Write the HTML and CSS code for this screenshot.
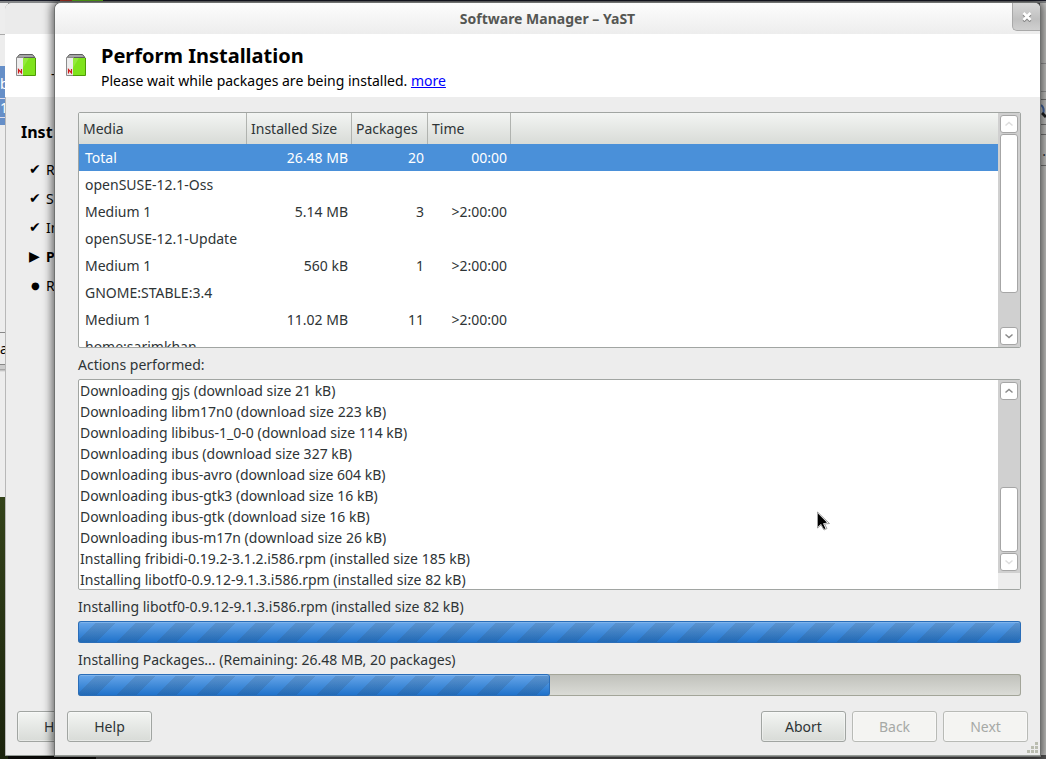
FILE: index.html
```html
<!DOCTYPE html>
<html lang="en">
<head>
<meta charset="utf-8">
<title>Software Manager – YaST</title>
<link rel="stylesheet" href="styles.css">
</head>
<body>
<div class="desktop">
  <div class="back-left" aria-hidden="true">
    <div class="back-toolbar"></div>
    <div class="back-selection"><span>b</span><span>1</span></div>
    <div class="back-button">a</div>
  </div>
  <div class="back-right" aria-hidden="true">
    <div class="back-right-bar"></div>
    <div class="back-right-line"></div>
    <div class="back-right-search"><svg viewBox="0 0 5 24" width="5" height="24"><path d="M0 5q4 3 2 9" stroke="#4569a8" stroke-width="2" fill="none"/><path d="M1 13l4 4" stroke="#222" stroke-width="3"/></svg></div>
    <div class="back-right-field">.</div>
  </div>
  <div class="top-icon" aria-hidden="true"></div>

  <section class="window parent" aria-label="Software installation steps">
    <div class="titlebar"></div>
    <header class="banner">
      <svg class="app-icon" viewBox="0 0 20 22" width="20" height="22"><path d="M3.500 .5h13l2.500 3H1z" fill="#a6a6a6" stroke="#5c5c5c"/><path d="M.5 3.500h7v18h-7z" fill="#ededed" stroke="#8c8c8c"/><path d="M7 4h12.500v17.500H7z" fill="#7fe31c"/><path d="M7 4h6L7 14z" fill="#93ea3c"/><path d="M19.500 4v17.500H7" fill="none" stroke="#4e9a06"/><path d="M2.500 19.500v-4l3 3.500v-4" fill="none" stroke="#d01c1c" stroke-width="1.200"/></svg>
      <span class="dash">-</span>
    </header>
    <div class="steps">
      <h2>Inst</h2>
      <ul>
        <li><span class="mark">✔</span>R</li>
        <li><span class="mark">✔</span>S</li>
        <li><span class="mark">✔</span>In</li>
        <li class="current"><span class="mark">▶</span>P</li>
        <li><span class="mark dot">●</span>R</li>
      </ul>
    </div>
    <footer class="parent-actions"><button class="button" type="button">H</button></footer>
  </section>

  <main class="window dialog">
    <div class="titlebar"><span>Software Manager – YaST</span>
      <button class="close" type="button" aria-label="Close"><svg viewBox="0 0 10 10" width="10" height="10"><path d="M1.500 2.500l7 7M8.500 2.500l-7 7" stroke="#888" stroke-width="2.500"/><path d="M1.500 1l7 7M8.500 1l-7 7" stroke="#fff" stroke-width="2.500"/></svg></button>
    </div>
    <header class="banner">
      <svg class="app-icon" viewBox="0 0 20 22" width="20" height="22"><path d="M3.500 .5h13l2.500 3H1z" fill="#a6a6a6" stroke="#5c5c5c"/><path d="M.5 3.500h7v18h-7z" fill="#ededed" stroke="#8c8c8c"/><path d="M7 4h12.500v17.500H7z" fill="#7fe31c"/><path d="M7 4h6L7 14z" fill="#93ea3c"/><path d="M19.500 4v17.500H7" fill="none" stroke="#4e9a06"/><path d="M2.500 19.500v-4l3 3.500v-4" fill="none" stroke="#d01c1c" stroke-width="1.200"/></svg>
      <div>
        <h1>Perform Installation</h1>
        <p>Please wait while packages are being installed. <a href="#more">more</a></p>
      </div>
    </header>

    <div class="content">
      <div class="frame media">
        <div class="viewport">
          <table>
            <colgroup><col class="c-media"><col class="c-size"><col class="c-packages"><col class="c-time"><col></colgroup>
            <thead><tr><th>Media</th><th>Installed Size</th><th>Packages</th><th>Time</th><th></th></tr></thead>
            <tbody>
              <tr class="selected"><td>Total</td><td>26.48 MB</td><td>20</td><td>00:00</td><td></td></tr>
              <tr><td>openSUSE-12.1-Oss</td><td></td><td></td><td></td><td></td></tr>
              <tr><td>Medium 1</td><td>5.14 MB</td><td>3</td><td>&gt;2:00:00</td><td></td></tr>
              <tr><td>openSUSE-12.1-Update</td><td></td><td></td><td></td><td></td></tr>
              <tr><td>Medium 1</td><td>560 kB</td><td>1</td><td>&gt;2:00:00</td><td></td></tr>
              <tr><td>GNOME:STABLE:3.4</td><td></td><td></td><td></td><td></td></tr>
              <tr><td>Medium 1</td><td>11.02 MB</td><td>11</td><td>&gt;2:00:00</td><td></td></tr>
              <tr><td>home:sarimkhan</td><td></td><td></td><td></td><td></td></tr>
            </tbody>
          </table>
        </div>
        <div class="scrollbar">
          <button type="button" class="off" aria-label="Scroll up"><svg viewBox="0 0 8 8" width="8" height="8"><path d="M.5 5.500L4 2.500l3.500 3"/></svg></button>
          <div class="track"><div class="thumb thumb-media"></div></div>
          <button type="button" aria-label="Scroll down"><svg viewBox="0 0 8 8" width="8" height="8"><path d="M.5 2.500L4 5.500l3.500-3"/></svg></button>
        </div>
      </div>

      <h2 class="label">Actions performed:</h2>
      <div class="frame actions">
        <ul class="viewport log">
          <li>Downloading gjs (download size 21 kB)</li>
          <li>Downloading libm17n0 (download size 223 kB)</li>
          <li>Downloading libibus-1_0-0 (download size 114 kB)</li>
          <li>Downloading ibus (download size 327 kB)</li>
          <li>Downloading ibus-avro (download size 604 kB)</li>
          <li>Downloading ibus-gtk3 (download size 16 kB)</li>
          <li>Downloading ibus-gtk (download size 16 kB)</li>
          <li>Downloading ibus-m17n (download size 26 kB)</li>
          <li>Installing fribidi-0.19.2-3.1.2.i586.rpm (installed size 185 kB)</li>
          <li>Installing libotf0-0.9.12-9.1.3.i586.rpm (installed size 82 kB)</li>
        </ul>
        <div class="scroll-column">
          <div class="scrollbar">
            <button type="button" aria-label="Scroll up"><svg viewBox="0 0 8 8" width="8" height="8"><path d="M.5 5.500L4 2.500l3.500 3"/></svg></button>
            <div class="track end"><div class="thumb thumb-actions"></div></div>
            <button type="button" class="off" aria-label="Scroll down"><svg viewBox="0 0 8 8" width="8" height="8"><path d="M.5 2.500L4 5.500l3.500-3"/></svg></button>
          </div>
          <div class="corner"></div>
        </div>
      </div>

      <p class="label" id="p1">Installing libotf0-0.9.12-9.1.3.i586.rpm (installed size 82 kB)</p>
      <div class="progress" role="progressbar" aria-labelledby="p1" aria-valuenow="100"><div class="fill" style="width:100%"></div></div>
      <p class="label" id="p2">Installing Packages... (Remaining: 26.48 MB, 20 packages)</p>
      <div class="progress" role="progressbar" aria-labelledby="p2" aria-valuenow="50"><div class="fill" style="width:50%"></div></div>
    </div>

    <footer class="buttons">
      <button class="button" type="button">Help</button>
      <span class="spacer"></span>
      <button class="button" type="button">Abort</button>
      <button class="button" type="button" disabled>Back</button>
      <button class="button" type="button" disabled>Next</button>
    </footer>
    <svg class="grip" viewBox="0 0 11 11" width="11" height="11" aria-hidden="true"><path d="M8 0h3v3H8zM4 4h3v3H4zM8 4h3v3H8zM0 8h3v3H0zM4 8h3v3H4zM8 8h3v3H8z" fill="#babdb0"/></svg>
  </main>
  <svg class="pointer" viewBox="0 0 13 20" width="13" height="20" aria-hidden="true"><path d="M.5 1v16l3.500-3 3 5 3-1.500-2.500-4.500 5-.5z" fill="#fff" stroke="#888" stroke-width=".8"/><path d="M1 2.500v13l3-2.500 3 5 1.500-.5-2.500-5 4-1z" fill="#000"/></svg>
</div>
</body>
</html>
```
FILE: styles.css
```css
* { box-sizing: border-box; }
body {
  margin: 0;
  font: 14px/20px "Noto Sans", "Open Sans", sans-serif;
  color: #2e3436;
}
h1, h2, p, ul { margin: 0; padding: 0; font-weight: normal; font-size: inherit; }
ul { list-style: none; }
.desktop {
  position: relative;
  height: 100vh;
  overflow: hidden;
  background: linear-gradient(90deg, #0a0a08 96px, #555 96px);
}
.desktop::before {
  content: "";
  position: absolute;
  inset: 0 0 auto 0;
  height: 3px;
  background: linear-gradient(#1b1d2a 1px, #858789 1px);
}
.top-icon {
  position: absolute;
  left: 60px;
  top: 0;
  width: 43px;
  height: 1px;
  background: linear-gradient(90deg, #c43a28 12px, #6ad01a 12px);
}

/* Slivers of the windows behind */
.back-left {
  position: absolute;
  left: 0;
  top: 3px;
  bottom: 0;
  width: 8px;
  display: flex;
  flex-direction: column;
  background: linear-gradient(#ededed 494px, #34431a 494px, #1b230d);
}
.back-toolbar { height: 32px; border-bottom: 1px solid #aaa; }
.back-selection {
  display: flex;
  flex-direction: column;
  gap: 4px;
  height: 59px;
  margin-top: 31px;
  padding-top: 8px;
  background: #668fc8;
  color: #fff;
}
.back-selection span { height: 20px; }
.back-selection span + span { border: 1px solid #dde; border-left: 0; line-height: 18px; }
.back-button {
  height: 40px;
  margin-top: 207px;
  line-height: 32px;
  color: #000;
  border-top: 1px solid #888;
  background: linear-gradient(#ededed 31px, #888 31px 32px, #ccc 32px 36px, #999 36px, #ededed);
}
.back-right {
  position: absolute;
  right: 0;
  top: 3px;
  bottom: 4px;
  width: 6px;
  background: #c8c8c6;
}
.back-right-bar { height: 61px; border-bottom: 1px solid #999; }
.back-right-line { height: 28px; border-bottom: 1px solid #999; }
.back-right-search { height: 26px; margin-top: 7px; padding-left: 1px; border: solid #777; border-width: 1px 0; }
.back-right-field { height: 32px; margin-top: 9px; border: solid #777; border-width: 1px 0; line-height: 32px; text-align: right; }

/* Windows */
.window {
  position: absolute;
  top: 3px;
  bottom: 3px;
  display: flex;
  flex-direction: column;
  background: #ededed;
  border-radius: 6px 6px 0 0;
  border-bottom: 1px solid #969c97;
}
.parent { left: 5px; width: 60px; overflow: hidden; box-shadow: inset 1px 0 #b8b8b8; }
.dialog {
  left: 55px;
  right: 6px;
  box-shadow: 0 0 0 1px #6f7170, 0 0 10px 3px rgba(0, 0, 0, .6);
}
.titlebar {
  position: relative;
  flex: 0 0 31px;
  display: flex;
  justify-content: center;
  align-items: center;
  border-radius: 6px 6px 0 0;
  background: linear-gradient(#fdfdfd, #ededed);
  font-weight: bold;
  color: #555753;
}
.parent .titlebar { background: #ebebeb; }
.close {
  position: absolute;
  right: 0;
  top: 0;
  width: 28px;
  height: 28px;
  padding: 0;
  border: 1px solid #a9a9a9;
  border-width: 0 0 1px 1px;
  border-radius: 0 5px 0 5px;
  background: linear-gradient(#d8d8d8, #c0c0c0 60%, #cfcfcf);
  display: grid;
  place-items: center;
}
.banner {
  flex: 0 0 63px;
  display: flex;
  align-items: flex-start;
  gap: 15px;
  padding: 10px 11px 0;
  background: #fff;
  color: #000;
}
.app-icon { flex: none; margin-top: 10px; }
.dash { margin-top: 20px; }
.banner h1 { font-size: 20px; line-height: 24px; font-weight: bold; }
.banner p { margin-top: 3px; }
.banner a { color: #00f; }

.steps { flex: 1; padding: 25px 0 0 16px; color: #000; }
.steps h2 { font-size: 16px; font-weight: bold; }
.steps ul { padding: 13px 0 0 8px; }
.steps li { display: flex; height: 29px; line-height: 29px; }
.steps .mark { flex: none; width: 17px; font-family: "DejaVu Sans", sans-serif; }
.steps .dot { font-size: 10px; padding-left: 2px; }
.current { font-weight: bold; }
.parent-actions { padding: 0 12px 13px; }
.parent-actions .button { padding-left: 26px; text-align: left; }

.content { flex: 1; padding: 15px 19px 0 23px; }
.frame { display: flex; border: 1px solid #a1a5a2; border-radius: 2px; background: #fff; overflow: hidden; }
.viewport { flex: 1; min-width: 0; overflow: hidden; }
.media { height: 236px; }
table { width: 100%; table-layout: fixed; border-collapse: separate; border-spacing: 0; }
.c-media { width: 168px; }
.c-size { width: 105px; }
.c-packages { width: 76px; }
.c-time { width: 83px; }
th {
  height: 31px;
  padding: 0 4px;
  text-align: left;
  font-weight: normal;
  white-space: nowrap;
  background: linear-gradient(#f3f5f3, #d8dbd7);
  border-right: 1px solid #b0b3af;
}
th:last-child { border-right: 0; }
td { height: 27px; padding: 0 4px 0 6px; text-align: right; white-space: nowrap; }
td:first-child { text-align: left; padding-right: 0; }
.selected { background: #4a90d9; color: #fff; }

.scrollbar { flex: 0 0 22px; display: flex; flex-direction: column; gap: 1px; padding: 2px; background: #d0d0d0; }
.scrollbar button {
  height: 18px;
  width: 18px;
  padding: 0;
  display: grid;
  place-items: center;
  border: 1px solid #a6a6a6;
  border-radius: 3px;
  background: #fff;
}
.scrollbar path { fill: none; stroke: #8a8a8a; stroke-width: 1.5; }
.scrollbar .off path { stroke: #ddd; }
.track { flex: 1; display: flex; flex-direction: column; }
.track.end { justify-content: flex-end; }
.thumb { border: 1px solid #a6a6a6; border-radius: 3px; background: #fff; }
.thumb-media { height: 83%; }
.thumb-actions { height: 43%; }
.scroll-column { flex: 0 0 22px; display: flex; flex-direction: column; }
.scroll-column .scrollbar { flex: 1; }
.corner { height: 16px; background: #ededed; }

.label { line-height: 20px; margin: 7px 0 4px; }
.actions { height: 211px; }
.log { line-height: 21px; padding-left: 1px; white-space: nowrap; }

.progress {
  height: 22px;
  border-radius: 3px;
  background: linear-gradient(#bfc0ba, #dcddd8);
  box-shadow: inset 0 0 0 1px #a3a599;
  margin-bottom: 7px;
}
.fill {
  height: 100%;
  border-radius: 3px;
  box-shadow: inset 0 0 0 1px #2a6db8, inset 0 2px #7fb3ea;
  background:
    linear-gradient(135deg, transparent 25%, rgba(46, 52, 54, .14) 25% 50%, transparent 50% 75%, rgba(46, 52, 54, .14) 75%) 0 0 / 40px 40px,
    linear-gradient(#6aa8eb, #1c70c9);
}

.buttons { display: flex; gap: 6px; padding: 0 12px 13px; }
.spacer { flex: 1; }
.button {
  width: 85px;
  height: 31px;
  padding: 0;
  font: inherit;
  color: #2e3436;
  border: 1px solid #a1a5a2;
  border-radius: 3px;
  background: linear-gradient(#f3f5f3, #d8dbd7);
  box-shadow: inset 0 0 0 1px rgba(255, 255, 255, .4);
}
.button:disabled { color: #a6a9a6; background: #f4f4f2; border-color: #b8bab6; }
.grip { position: absolute; right: 2px; bottom: 2px; }
.pointer { position: absolute; left: 817px; top: 511px; }
```
